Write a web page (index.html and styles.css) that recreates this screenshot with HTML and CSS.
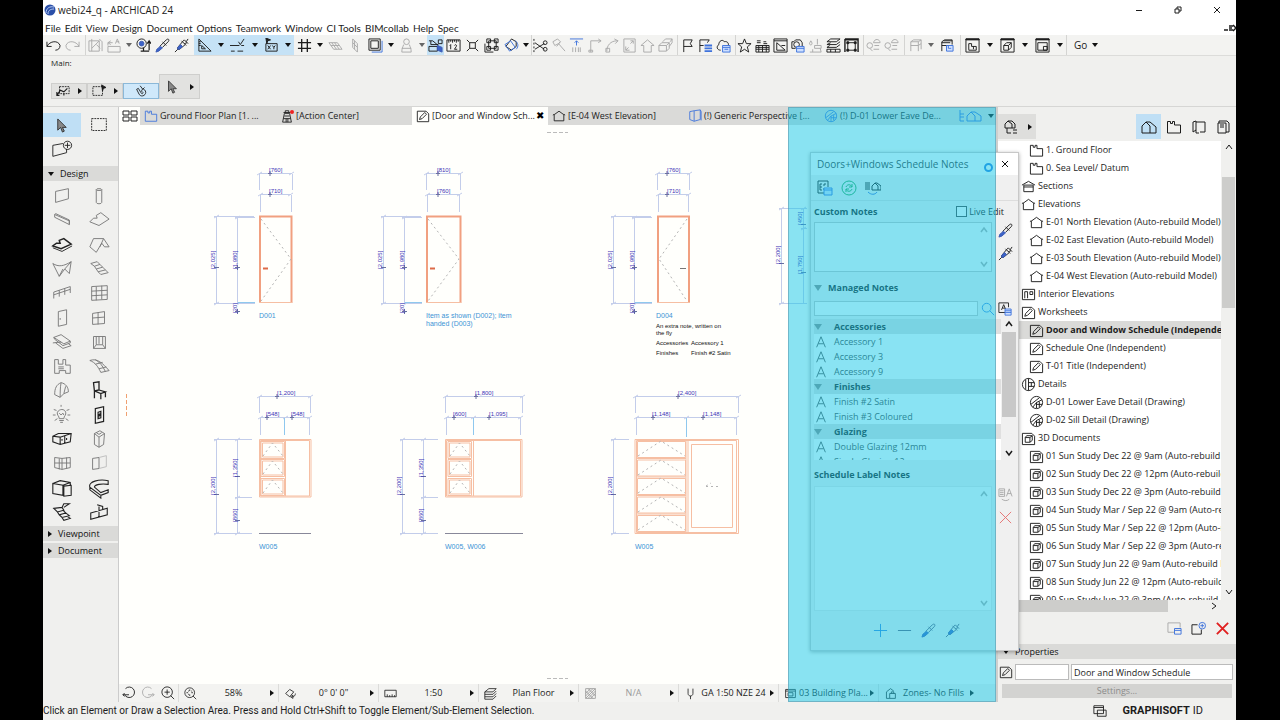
FILE: index.html
```
<!DOCTYPE html>
<html lang="en">
<head>
<meta charset="utf-8">
<title>webi24_q - ARCHICAD 24</title>
<link rel="stylesheet" href="styles.css">
</head>
<body>
<svg class="sprite" aria-hidden="true">
<symbol id="undo" viewBox="0 0 16 16"><path d="M1 4v5h5M1 9c3-6 12-7 14-1 0 3-2 5-5 5"/></symbol>
<symbol id="redo" viewBox="0 0 16 16"><path d="M15 4v5h-5M15 9C12 3 3 2 1 8c0 3 2 5 5 5"/></symbol>
<symbol id="pick" viewBox="0 0 16 16"><path d="M1 3h11v11H1zM4 1v13M4 11l8-8M12 1l3 3v10M9 7l4 4"/></symbol>
<symbol id="tag" viewBox="0 0 16 16"><path d="M1 9h13v6H1zM1 8V5h5M4 3L1 5l3 2M9 6l2-5 2 5M10 4h3"/></symbol>
<symbol id="mag" viewBox="0 0 16 16"><circle cx="6" cy="6" r="5"/><circle class="bf" cx="6" cy="6" r="2.5"/><path d="M8 10v4M5 14h9M14 13V4M12 6l2-3 2 3" stroke-width="1.3"/></symbol>
<symbol id="drop" viewBox="0 0 16 16"><path d="M9 5l3-3c2-2 4 0 2 2l-3 3M8 4l4 4M9 5l-4 4M11 7l-3 3"/><path class="bf" d="M5.500 9L8 10.500 4 14l-3 1 1-3z"/></symbol>
<symbol id="syr" viewBox="0 0 16 16"><path d="M11 2l4 4M13 4l2-3M8 3l5 5M9 4l2-2M11 6l3-1M1 15l3-3M9 4L4 10v2h2l6-5"/><path class="bf" d="M7 7l2 2-3 3H4v-2z"/></symbol>
<symbol id="tri" viewBox="0 0 16 16"><path d="M2 1v13h13zM5 8v3.500h4z M2 4h2M2 6h2M2 8h2"/></symbol>
<symbol id="snap" viewBox="0 0 16 16"><path d="M0 8h10M1 14h4M8 14h6M9 4l2 3 4-6M12 8h3"/></symbol>
<symbol id="xy" viewBox="0 0 16 16"><path d="M2 6h12v8H2zM4 8l3 4M7 8l-3 4M9 8l1.500 2L12 8M10.500 10v2"/><path class="k" d="M2 0l5 2-3 1-1 3z"/></symbol>
<symbol id="grid" viewBox="0 0 16 16"><path d="M5 1v14M11 1v14M1 5h14M1 11h14" stroke-width="1.400"/></symbol>
<symbol id="plane" viewBox="0 0 16 16"><path d="M1 5h9l5 7H6zM4 5l5 7M7 5l5 7M3 8h9"/></symbol>
<symbol id="planev" viewBox="0 0 16 16"><path d="M5 1l5 5v9l-5-5zM7 3v9M5 5l5 5"/></symbol>
<symbol id="sq" viewBox="0 0 16 16"><path d="M1 1h12v12H1zM3 3h8v8H3z"/><path class="bs" d="M15 3v12H4"/></symbol>
<symbol id="man" viewBox="0 0 16 16"><circle cx="8" cy="4" r="3"/><path d="M5 7c-1 3-2 4-2 8h10c0-4-1-5-2-8M3 11h10"/></symbol>
<symbol id="edit" viewBox="0 0 16 16"><path d="M1 3h4l6 5M3 3v4h8M11 2h4v4h-4zM1 9h9v5H1z"/><path class="bf" d="M10 8l5 2v5l-5-2z"/></symbol>
<symbol id="r12" viewBox="0 0 16 16"><path d="M1 2h14v12H1zM3 2v3M5 2v2M7 2v3M9 2v2M11 2v3M13 2v2M4 8l1-1v5M9 8c1-2 3 0 2 1l-2 3h3"/></symbol>
<symbol id="inter" viewBox="0 0 16 16"><path d="M5 5h6v6H5zM2 2l3 3M14 2l-3 3M2 14l3-3M14 14l-3-3"/></symbol>
<symbol id="nodes" viewBox="0 0 16 16"><path d="M5 3h8v8H5zM3 1h4v4H3zM11 1h4v4h-4zM11 9h4v4h-4zM3 9h4v4H3zM1 6v9h9"/></symbol>
<symbol id="rot" viewBox="0 0 16 16"><path d="M8 1l5 3v5l-5 4-6-4z"/><path class="bs" d="M1 7l6-4 5 7-6 4zM12 3c3 2 4 6 1 9"/></symbol>
<symbol id="cut" viewBox="0 0 16 16"><path d="M1 1v14" stroke-dasharray="2"/><path d="M2 5l10 7M2 12l10-6"/><circle cx="13" cy="5" r="2"/><circle cx="13" cy="12" r="2"/></symbol>
<symbol id="axe" viewBox="0 0 16 16"><path d="M2 4l5-3 3 3-2 2 7 8M2 4l2 4 4-2M10 4l-4 5"/></symbol>
<symbol id="arr" viewBox="0 0 16 16"><path class="bs" d="M1 1h14M8 8V3M6 5l2-2 2 2"/><path d="M4 10v5M7 10v5M10 10v5M12 10v5"/></symbol>
<symbol id="ang" viewBox="0 0 16 16"><path d="M4 15V3h11M2 13h4v2H2zM12 1l3 2-3 2"/></symbol>
<symbol id="arc" viewBox="0 0 16 16"><path d="M3 14C3 8 7 3 14 3M2 11h4v4H2zM11 1l4 2-3 3"/></symbol>
<symbol id="rs" viewBox="0 0 16 16"><path d="M2 1h12v14H2zM9 3h3v3M12 3L9 6M4 9v4h4M4 13l3-3"/></symbol>
<symbol id="home" viewBox="0 0 16 16"><path d="M1 8l7-6 7 6h-3v7H4V8z"/></symbol>
<symbol id="boxes" viewBox="0 0 16 16"><path d="M1 8l3-3h8l-3 3zM1 8v6h8V8M9 14l3-3V5M5 4l3-3h7l-2 3M15 1v4l-3 4"/></symbol>
<symbol id="flag" viewBox="0 0 16 16"><path d="M4 15V2h9l-2 4 2 3H4"/></symbol>
<symbol id="flagb" viewBox="0 0 16 16"><path d="M2 15V2h10l-2 3M2 8h4"/><path class="bs" d="M7 8h8M7 11h8M7 14h8" stroke-width="2"/></symbol>
<symbol id="cloudb" viewBox="0 0 16 16"><path d="M5 13c-4 0-5-4-2-6 0-4 4-6 6-3 3-1 5 2 4 4"/><path class="lb" d="M7 8h8v7H7zM7 10h8M9 12h4"/></symbol>
<symbol id="star" viewBox="0 0 16 16"><path d="M8 1l2 5h5l-4 3.500 1.500 5.500L8 12l-4.500 3L5 9.500 1 6h5z"/></symbol>
<symbol id="wall" viewBox="0 0 16 16"><path d="M1 8h14v7H1zM1 10h14M1 12h14M4 8v7M8 8v7M12 8v7M2 5h4M2 3h4M9 6h4M9 4h3"/></symbol>
<symbol id="pic" viewBox="0 0 16 16"><path d="M1 1h14v14H1zM1 3h14M4 13V5l9 8zM9 8h4"/></symbol>
<symbol id="gear" viewBox="0 0 16 16"><circle cx="7" cy="7" r="3"/><path d="M2 4h2l2-2h5l2 3v4M2 4v7h4"/><path class="lb" d="M7 9h8v6H7zM7 11h8"/></symbol>
<symbol id="brush" viewBox="0 0 16 16"><path d="M3 3c3 4 0 5-1 4s0-2 1-4M10 1v6M7 8h7v3H7zM2 15h12l-1-4M5 12v3"/></symbol>
<symbol id="lay" viewBox="0 0 16 16"><path d="M1 4l4-3h10l-4 3zM1 7l4-2M1 7h10l4-3M1 10h10l4-3M1 10l3-2M1 12h14v3H1zM5 12v3M10 12v3"/></symbol>
<symbol id="frame" viewBox="0 0 16 16"><path d="M1 2h14M1 1h14v14M1 1v14" stroke-width="1.500"/><path d="M4 5h8v8H4z"/><path class="k" d="M3 4h2v2H3zM11 4h2v2h-2zM3 12h2v2H3zM11 12h2v2h-2z"/></symbol>
<symbol id="bal" viewBox="0 0 16 16"><circle cx="4" cy="8" r="3"/><path d="M8 5c1-5 7-4 7 0zM9 8h5M8 12h6M4 11l3 3"/></symbol>
<symbol id="chairg" viewBox="0 0 16 16"><path d="M3 14V4l3-2h8v10M3 8h8l3-2M11 8v6M3 4h8l3-2M11 4v4"/></symbol>
<symbol id="chairb" viewBox="0 0 16 16"><path d="M3 14V4l3-2h8v5M3 8h8M3 5h9M5 3h9"/><path class="lb" d="M8 8h7v6H8zM10 8v3h3"/></symbol>
<symbol id="wp" viewBox="0 0 16 16"><path class="k" d="M1 1h14v1H1z"/><path d="M1 1h14v14H1zM4 12V6h3v3h5v4H4zM9 9v3"/></symbol>
<symbol id="w3" viewBox="0 0 16 16"><path class="k" d="M1 1h14v1H1z"/><path d="M1 1h14v14H1zM4 8h5v5H4zM4 8l3-3h5L9 8M12 5v5l-3 3"/></symbol>
<symbol id="wl" viewBox="0 0 16 16"><path class="k" d="M1 1h14v1H1z"/><path d="M1 1h14v14H1zM3 5h10v8H3zM9 9h4v4H9z"/></symbol>
<symbol id="arrow" viewBox="0 0 16 16"><path class="gf" d="M4 1v12l3-3 2 5 2-1-2-4h4z"/></symbol>
<symbol id="plan" viewBox="0 0 16 16"><path d="M1.500 14V2.500h3v2h2v-2h2V6h6v8z"/></symbol>
<symbol id="elev" viewBox="0 0 16 16"><path d="M2.500 6.500L8 2.500l5.500 4v7h-11zM1 7l1.500-1M15 7l-1.500-1"/></symbol>
<symbol id="sect" viewBox="0 0 16 16"><path d="M1 6.500l7-4 7 4M3 6.500v7h10v-7zM3 8.500h10"/></symbol>
<symbol id="iel" viewBox="0 0 16 16"><path d="M1.500 2.500h13v11h-13zM4 12V5h3v7M9.500 5h3v3h-3z"/></symbol>
<symbol id="work" viewBox="0 0 16 16"><path d="M1.500 2.500h10l3 3v9h-13zM4 12l1-3 5-5 2 2-5 5z"/></symbol>
<symbol id="det" viewBox="0 0 16 16"><circle cx="8" cy="8" r="6.500"/><path d="M8 1.500v13M5 3v10M8 6h6M8 10h6M11 6v4"/></symbol>
<symbol id="d2" viewBox="0 0 16 16"><circle cx="8" cy="8" r="6.500"/><path d="M2 10l9-7M4 13l4-5 6-3M8 8v6M8 10h6M11 7v6"/></symbol>
<symbol id="d3" viewBox="0 0 16 16"><path d="M1.500 2.500h10l3 3v9h-13zM4.500 7h5v5h-5zM4.500 7L6 5h6L9.500 7M12 5v5l-2.500 2"/></symbol>
<symbol id="tower" viewBox="0 0 16 16"><path d="M5 5h6l2 10H3zM4 4h8M6 4V2h4v2M5 8h6M4 11h8M7 11v4M9 11v4"/></symbol>
<symbol id="persp" viewBox="0 0 16 16"><path d="M2 3l5-1v12l-5-2zM7 2l7-1v11l-7 2M14 1l1 2v10"/></symbol>
<symbol id="nav" viewBox="0 0 16 16"><path d="M2 5l3-3 4 3v4H2zM5 2h4l3 3v4H9M4 9v5h4M10 11h4M10 14h4"/></symbol>
<symbol id="house" viewBox="0 0 16 16"><path d="M1 14V7l4-4 4 4v7zM5 3h4l6 5v6H9"/></symbol>
<symbol id="lbk" viewBox="0 0 16 16"><path d="M2 13V3l3-1v9zM5 3h9v10H9M5 11v3h3"/></symbol>
<symbol id="book" viewBox="0 0 16 16"><path d="M2 4h8v10H2zM4 6h4M4 8h4M3 4V2h8l2 2v9h-3"/></symbol>
<symbol id="ref" viewBox="0 0 16 16"><circle cx="8" cy="8" r="7"/><path d="M5 7c1-3 5-3 6 0M11 4v3H8M11 9c-1 3-5 3-6 0M5 12V9h3"/></symbol>
<symbol id="ec" viewBox="0 0 16 16"><path d="M10 13H1V1h10v6M3 4h2M3 4v6h2M3 7h2M9 4H7v2M7 8v2"/><path class="lb" d="M7 8h8v7H7zM7 10h8"/></symbol>
<symbol id="ab" viewBox="0 0 16 16"><path d="M8 12H1V1h11v5M4 9l2.500-6L9 9M5 7h3"/><path class="lb" d="M8 8h7v7H8zM8 10h7M8 12h7"/></symbol>
<symbol id="link" viewBox="0 0 16 16"><path d="M0 3h5M0 5h5M0 7h5M0 9h5M7 6l3-3 3 3v4H7zM10 3h2l4 3v4h-3"/><path class="bs" d="M3 12c3 3 7 3 9 0"/></symbol>
<symbol id="A" viewBox="0 0 16 16"><path d="M3 14L8 2l5 12M5 10h6"/></symbol>
<symbol id="lens" viewBox="0 0 16 16"><circle cx="6.500" cy="6.500" r="5"/><path d="M10 10l5 5"/></symbol>
<symbol id="zin" viewBox="0 0 16 16"><circle cx="7" cy="7" r="6"/><path d="M11 11l4 4M4 7h6M7 4v6"/></symbol>
<symbol id="zfit" viewBox="0 0 16 16"><circle cx="7" cy="7" r="6"/><path d="M11 11l4 4M3 7h2M9 7h2M7 3v2M7 9v2M5 5h1M9 5h1M5 9h1"/></symbol>
<symbol id="zprev" viewBox="0 0 16 16"><path d="M3 10a6 6 0 1 0 1-7M1 10h7M3 8l-2 2 2 2"/></symbol>
<symbol id="znext" viewBox="0 0 16 16"><path d="M13 10a6 6 0 1 1-1-7M15 10H8M13 8l2 2-2 2"/></symbol>
<symbol id="rule" viewBox="0 0 16 16"><path d="M1 4h14v8H1zM4 9v3M7 10v2M10 9v3M13 10v2"/></symbol>
<symbol id="orient" viewBox="0 0 16 16"><path d="M2 8l5-5 5 3-5 6zM10 12c3 0 4-2 4-4M8 12l3-2v4z"/></symbol>
<symbol id="stack" viewBox="0 0 16 16"><path d="M1 6l5-4h9l-4 4zM1 9h10l4-4M1 12h10l4-4M1 15h10l4-4M1 6v9"/></symbol>
<symbol id="hatch" viewBox="0 0 16 16"><path d="M2 2h12v12H2zM2 8l6-6M2 14L14 2M8 14l6-6M2 5l9 9M5 2l9 9M2 11l9-9M5 14l9-9"/></symbol>
<symbol id="pen" viewBox="0 0 16 16"><path d="M5 2v6c0 4 6 4 6 0V2M8 11v4"/></symbol>
<symbol id="doc" viewBox="0 0 16 16"><path d="M2 3h12v10H2zM2 5h12M5 7h6v4H5z"/></symbol>
<symbol id="lock" viewBox="0 0 16 16"><path d="M3 6l5-4 4 3M3 6v8h4M7 8h7v6H7zM9 8V6h3v2"/></symbol>
<symbol id="newv" viewBox="0 0 16 16"><path d="M11 9v5H1V4h6"/><circle class="bs" cx="12" cy="5" r="3.500"/><path class="bs" d="M10 5h4M12 3v4"/></symbol>
<symbol id="setv" viewBox="0 0 16 16"><path d="M8 12H1V2h13v5"/><path class="bs" d="M8 8h7v6H8zM8 10h7"/></symbol>
<symbol id="x" viewBox="0 0 16 16"><path d="M2 2l12 12M14 2L2 14"/></symbol>
<symbol id="plus" viewBox="0 0 16 16"><path d="M8 1v14M1 8h14"/></symbol>
<symbol id="minus" viewBox="0 0 16 16"><path d="M1 8h14"/></symbol>
<symbol id="up" viewBox="0 0 8 8"><path d="M1 6l3-4 3 4"/></symbol>
<symbol id="dn" viewBox="0 0 8 8"><path d="M1 2l3 4 3-4"/></symbol>
<symbol id="rt" viewBox="0 0 8 8"><path d="M2 1l4 3-4 3"/></symbol>
<!-- toolbox -->
<symbol id="t1" viewBox="0 0 24 24"><path d="M5 7l14-3v11L5 19z"/></symbol>
<symbol id="t2" viewBox="0 0 24 24"><ellipse cx="12" cy="5" rx="3" ry="1"/><path d="M9 5v14c0 2 6 2 6 0V5"/></symbol>
<symbol id="t3" viewBox="0 0 24 24"><path d="M4 6l16 7v4L4 9zM4 6l1-1 15 7v5"/></symbol>
<symbol id="t4" viewBox="0 0 24 24"><path d="M2 14l4-4 4 0-1-3 5-3 9 7-11 7z"/></symbol>
<symbol id="t5" viewBox="0 0 24 24"><path stroke-width="1.600" d="M2 13l4-3 4 0-1-3 5-2 8 6-11 5z"/><path d="M2 15l10 4 11-6"/></symbol>
<symbol id="t6" viewBox="0 0 24 24"><path d="M2 14l4-9h11l6 9-5 0-3-4-6 10zM17 5l-4 9"/></symbol>
<symbol id="t7" viewBox="0 0 24 24"><path d="M2 6c6 4 12 3 20-2l-2 13-5-5-6 8zM15 12l7-8M9 20l4-8"/></symbol>
<symbol id="t8" viewBox="0 0 24 24"><path d="M3 6l7-2 3 3-6 2zM7 9l2 3 7-2-3-3M9 12l2 3 8-2-3-3M11 15l3 3 8-2-3-3"/></symbol>
<symbol id="t9" viewBox="0 0 24 24"><path d="M3 18v-7l18-6v7M3 14l18-6M9 9v7M15 7v7"/></symbol>
<symbol id="t10" viewBox="0 0 24 24"><path d="M4 5l17-1v15L4 20zM9 5v15M15 4v15M4 10l17-1M4 15l17-1"/></symbol>
<symbol id="t11" viewBox="0 0 24 24"><path d="M8 5l9-2v16l-9 2zM10 12v2"/></symbol>
<symbol id="t12" viewBox="0 0 24 24"><path d="M5 7l13-2v13l-13 1zM11 6v13M5 12l13-1"/></symbol>
<symbol id="t13" viewBox="0 0 24 24"><path d="M3 7l8-3 10 7-7 3zM3 7l1 2 9 7 8-3v-2M5 13l8 6 9-3-3-2M2 13l9-1"/></symbol>
<symbol id="t14" viewBox="0 0 24 24"><path d="M6 6h13v13H6zM9 6v9h7V6M6 19l3-4M19 19l-3-4M12 6v8"/></symbol>
<symbol id="t15" viewBox="0 0 24 24"><path d="M4 5h4v5h5V5h3v6h5v9h-5v-3H9v3H4zM8 13h6M8 15h6"/></symbol>
<symbol id="t16" viewBox="0 0 24 24"><path d="M2 6c8-3 14 3 21 11l-9 2C11 13 8 8 2 6zM8 10l8-2M12 15l8-2M8 5c5 3 8 7 11 13"/></symbol>
<symbol id="t17" viewBox="0 0 24 24"><path d="M4 17c0-7 2-11 7-13 5 1 8 5 8 10l-5 2-4 4zM11 4c-1 5-1 11-1 16M16 8l-2 8"/></symbol>
<symbol id="t18" viewBox="0 0 24 24"><path stroke-width="1.400" d="M6 4l6-1v9l-5 1zM7 13v8M12 12l7 2-5 2-7-3M19 14v6M14 16v6"/></symbol>
<symbol id="t19" viewBox="0 0 24 24"><path d="M9 16c0-3-3-4-2-7 2-4 8-4 9 0 1 3-2 4-2 7zM9 18h5M10 20h3M9 10l2 2 2-2 1 2M3 6l3 1M20 6l-3 1M2 12h3M18 12h3M4 18l3-2M19 18l-3-2M11 1v2"/></symbol>
<symbol id="t20" viewBox="0 0 24 24"><path d="M8 5l9-2v16l-9 2zM11 9l3-1v7l-3 1zM12 11v3M13 10v3" stroke-width="1.300"/></symbol>
<symbol id="t21" viewBox="0 0 24 24"><path stroke-width="1.200" d="M2 9l6-3 14 0-1 9-11 3-8-3zM2 9l8 1 12-4M10 10v8M15 9v8M12 12v2M17 11v2"/></symbol>
<symbol id="t22" viewBox="0 0 24 24"><path d="M7 6l6-3 5 3-1 12-5 3-5-3zM7 6l5 4 6-4M12 10v11M9 5l3 2 3-2"/></symbol>
<symbol id="t23" viewBox="0 0 24 24"><path d="M4 6l8 1 9-1v11l-9 2-8-2zM4 12h17M9 7v12M12 7v12M17 6v12"/></symbol>
<symbol id="t24" viewBox="0 0 24 24"><path d="M5 7l7-1v12l-7 1z"/><path stroke="#bbb" d="M12 6l8-2v12l-8 2"/></symbol>
<symbol id="t25" viewBox="0 0 24 24"><path stroke-width="1.200" d="M2 7l8-3 11 2v3M2 7l11 2v11L2 18zM13 9l8-3M14 10l8-1v11l-8 1z"/></symbol>
<symbol id="t26" viewBox="0 0 24 24"><path stroke-width="1.200" d="M22 4c-10-2-22 1-20 7l12 9 8-3v-3l-8 3-7-6c0-3 8-4 15-3zM2 11v3l12 9v-3"/></symbol>
<symbol id="t27" viewBox="0 0 24 24"><path stroke-width="1.200" d="M3 8l9-1 2 3-7 2zM12 7l2-4h6l-6 4M7 12l2 3 7-2-3-3M9 15l3 3 8-2-4-3M12 18l2 3 7-2-3-2"/></symbol>
<symbol id="t28" viewBox="0 0 24 24"><path stroke-width="1.200" d="M3 13l18-5v7L3 20zM12 6v12M10 4l6 2v3"/></symbol>
<symbol id="t29" viewBox="0 0 24 24"><path d="M4 5h16v13H4z" stroke-dasharray="2 1"/></symbol>
<symbol id="t30" viewBox="0 0 24 24"><path d="M2 8l11-2M2 8v12l15-4v-4"/><circle cx="18" cy="8" r="4.500"/><path d="M15 8h6M18 5v6"/></symbol>
</svg>

<div class="app">
<header class="title"><svg class="logo" viewBox="0 0 12 12"><circle cx="6" cy="6" r="5.500" fill="#2b4fa8" stroke="none"/><path d="M2 9c0-5 4-7 8-6M4 10c0-4 3-5 6-5" stroke="#b9cdf3"/></svg><h1>webi24_q - ARCHICAD 24</h1>
<div class="win"><button aria-label="Minimise"><svg viewBox="0 0 8 8"><path d="M1 4.500h6"/></svg></button><button aria-label="Restore"><svg viewBox="0 0 8 8"><path d="M1 3h4v4H1zM3 3V1h4v4H5"/></svg></button><button aria-label="Close"><svg viewBox="0 0 8 8"><path d="M1 1l6 6M7 1L1 7"/></svg></button></div></header>
<nav class="menu"><a href="#">File</a><a href="#">Edit</a><a href="#">View</a><a href="#">Design</a><a href="#">Document</a><a href="#">Options</a><a href="#">Teamwork</a><a href="#">Window</a><a href="#">CI Tools</a><a href="#">BIMcollab</a><a href="#">Help</a><a href="#">Spec</a><svg class="dock" viewBox="0 0 12 8"><path d="M0 6h4M5 2h4M5 4h3M5 6h4M9 1l3 3-3 3" stroke-width="1.500"/></svg></nav>

<div class="bar">
<div class="g w2"><button aria-label="Undo"><svg><use href="#undo"/></svg></button><button class="off" aria-label="Redo"><svg><use href="#redo"/></svg></button></div>
<div class="g w6"><button class="off" aria-label="Find"><svg><use href="#pick"/></svg></button><button class="off" aria-label="Label"><svg><use href="#tag"/></svg></button><i class="c off"></i><button aria-label="Inspect"><svg><use href="#mag"/></svg></button><button aria-label="Pick up"><svg><use href="#drop"/></svg></button><button aria-label="Inject"><svg><use href="#syr"/></svg></button></div>
<div class="g on w5"><button aria-label="Guides"><svg><use href="#tri"/></svg></button><i class="c"></i><button aria-label="Snap"><svg><use href="#snap"/></svg></button><i class="c"></i><button aria-label="Coordinates"><svg><use href="#xy"/></svg></button><i class="c"></i></div>
<div class="g n w8"><button aria-label="Grid"><svg><use href="#grid"/></svg></button><i class="c"></i><button class="off" aria-label="Plane"><svg><use href="#plane"/></svg></button><button class="off" aria-label="Vertical plane"><svg><use href="#planev"/></svg></button><button aria-label="Trace"><svg><use href="#sq"/></svg></button><i class="c"></i><button class="off" aria-label="Lock"><svg><use href="#man"/></svg></button><i class="c off"></i></div>
<div class="g n on w1"><button aria-label="Edit"><svg><use href="#edit"/></svg></button></div>
<div class="g n w4"><button aria-label="Measure"><svg><use href="#r12"/></svg></button><button aria-label="Explode"><svg><use href="#inter"/></svg></button><button aria-label="Group"><svg><use href="#nodes"/></svg></button><button aria-label="Rotate"><svg><use href="#rot"/></svg></button><i class="c"></i></div>
<div class="g w9"><button aria-label="Cut"><svg><use href="#cut"/></svg></button><button class="off" aria-label="Trim"><svg><use href="#axe"/></svg></button><button class="off" aria-label="Adjust"><svg><use href="#arr"/></svg></button><button class="off" aria-label="Corner"><svg><use href="#ang"/></svg></button><button class="off" aria-label="Fillet"><svg><use href="#arc"/></svg></button><button class="off" aria-label="Resize"><svg><use href="#rs"/></svg></button><button class="off" aria-label="Roof"><svg><use href="#home"/></svg></button><button class="off" aria-label="Solids"><svg><use href="#boxes"/></svg></button></div>
<div class="g w3"><button aria-label="Flag"><svg><use href="#flag"/></svg></button><button aria-label="Flag list"><svg><use href="#flagb"/></svg></button><button aria-label="Cloud"><svg><use href="#cloudb"/></svg></button></div>
<div class="g w7"><button aria-label="Favourites"><svg><use href="#star"/></svg></button><button aria-label="Materials"><svg><use href="#wall"/></svg></button><button aria-label="Picture"><svg><use href="#pic"/></svg></button><button aria-label="Camera"><svg><use href="#gear"/></svg></button><button class="off" aria-label="Surface"><svg><use href="#brush"/></svg></button><button aria-label="Layers"><svg><use href="#lay"/></svg></button><button aria-label="Frame"><svg><use href="#frame"/></svg></button></div>
<div class="g w2"><button class="off" aria-label="Send"><svg><use href="#bal"/></svg></button><button class="off" aria-label="Receive"><svg><use href="#bal"/></svg></button></div>
<div class="g w10"><button class="off" aria-label="Object"><svg><use href="#chairg"/></svg></button><i class="c off"></i><button aria-label="Object settings"><svg><use href="#chairb"/></svg></button></div>
<div class="g w6"><button aria-label="Plan window"><svg><use href="#wp"/></svg></button><i class="c"></i><button aria-label="3D window"><svg><use href="#w3"/></svg></button><i class="c"></i><button aria-label="Layout window"><svg><use href="#wl"/></svg></button><i class="c"></i></div>
<button class="go">Go<i class="c"></i></button>
</div>

<section class="info"><p>Main:</p><div class="modes"><button class="m" aria-label="Selection method"><svg viewBox="0 0 16 16"><path d="M4 3h11v8H4z" stroke-dasharray="2 1"/><path d="M1 13l4-6 4 2 4-4M1 9v4h3M9 11v2" stroke-width="1.300"/></svg><i class="r"></i></button><button class="m" aria-label="Marquee method"><svg viewBox="0 0 16 16"><path d="M1 3h11v10H1z" stroke-dasharray="2 1"/><path class="k" d="M11 1l5 3-3 1-1 3z"/></svg><i class="r"></i></button><button class="m sel" aria-label="Magnet"><svg viewBox="0 0 16 16"><path d="M3 6l3 6c3 4 9 0 7-4S8 6 9 9M3 6l2-1 3 5c1 2 3 1 2-1M7 2l3 4 2-2"/></svg></button><button class="m tall" aria-label="Arrow"><svg><use href="#arrow"/></svg><i class="r"></i></button></div></section>

<main>
<aside class="tools">
<div class="pair"><button class="sel" aria-label="Arrow"><svg class="s"><use href="#arrow"/></svg></button><button aria-label="Marquee"><svg class="k2"><use href="#t29"/></svg></button><button aria-label="New tool"><svg class="k2"><use href="#t30"/></svg></button></div>
<h2><i class="c"></i>Design</h2>
<div class="pair set">
<button aria-label="Wall"><svg><use href="#t1"/></svg></button><button aria-label="Column"><svg><use href="#t2"/></svg></button><button aria-label="Beam"><svg><use href="#t3"/></svg></button><button aria-label="Slab"><svg><use href="#t4"/></svg></button><button aria-label="Slab 2" class="dk"><svg><use href="#t5"/></svg></button><button aria-label="Roof"><svg><use href="#t6"/></svg></button><button aria-label="Shell"><svg><use href="#t7"/></svg></button><button aria-label="Stair"><svg><use href="#t8"/></svg></button><button aria-label="Railing"><svg><use href="#t9"/></svg></button><button aria-label="Curtain wall"><svg><use href="#t10"/></svg></button><button aria-label="Door"><svg><use href="#t11"/></svg></button><button aria-label="Window"><svg><use href="#t12"/></svg></button><button aria-label="Skylight"><svg><use href="#t13"/></svg></button><button aria-label="Opening"><svg><use href="#t14"/></svg></button><button aria-label="Zone"><svg><use href="#t15"/></svg></button><button aria-label="Mesh"><svg><use href="#t16"/></svg></button><button aria-label="Morph"><svg><use href="#t17"/></svg></button><button aria-label="Object" class="dk"><svg><use href="#t18"/></svg></button><button aria-label="Lamp"><svg><use href="#t19"/></svg></button><button aria-label="Switch" class="dk"><svg><use href="#t20"/></svg></button><button aria-label="Cabinet" class="dk"><svg><use href="#t21"/></svg></button><button aria-label="Equipment"><svg><use href="#t22"/></svg></button><button aria-label="Corner window"><svg><use href="#t23"/></svg></button><button aria-label="Wall end"><svg><use href="#t24"/></svg></button><button aria-label="Cupboard" class="dk"><svg><use href="#t25"/></svg></button><button aria-label="Counter" class="dk"><svg><use href="#t26"/></svg></button><button aria-label="Steps" class="dk"><svg><use href="#t27"/></svg></button><button aria-label="Fence" class="dk"><svg><use href="#t28"/></svg></button>
</div>
<h2><i class="r"></i>Viewpoint</h2>
<h2><i class="r"></i>Document</h2>
</aside>

<section class="work">
<div class="tabs"><button class="all" aria-label="All tabs"><svg class="k2" viewBox="0 0 16 12"><path d="M1 1h6v4H1zM9 1h6v4H9zM1 7h6v4H1zM9 7h6v4H9z"/></svg></button>
<a href="#" class="blue"><svg><use href="#plan"/></svg><span>Ground Floor Plan [1. ...</span></a><a href="#"><svg><use href="#tower"/><circle cx="13" cy="3" r="2" fill="#e22" stroke="none"/></svg><span>[Action Center]</span></a><a href="#" class="cur"><svg><use href="#work"/></svg><span>[Door and Window Sch...</span><b>✖</b></a><a href="#"><svg><use href="#elev"/></svg><span>[E-04 West Elevation]</span></a><a href="#" class="blue"><svg><use href="#persp"/></svg><span>(!) Generic Perspective [...</span></a><a href="#" class="blue"><svg><use href="#d2"/></svg><span>(!) D-01 Lower Eave De...</span></a><button class="tabm" aria-label="Tab list"><svg viewBox="0 0 24 16"><path d="M1 2v11h4M1 6h4M1 9h4M8 13V8l4-4 4 4v5zM12 4h4l6 4v5h-6"/></svg><i class="c"></i></button></div>
<div class="canvas">
<svg width="877" height="559" viewBox="119 125 877 559" class="draw">
<defs>
<g id="vdoor" class="dim"><path d="M216.500 216v87M237.500 217v86M214 216.500h40M235 217.500h20M214 303.500h41M214 218l5-3M235 219l5-3M214 305l5-3"/><path class="lt" d="M238 302.500h17"/><path class="tk" d="M214 267.500h5M235 267.500h5M237.500 265v5M235 311.500h5M237.500 309v5"/><text transform="translate(215 269) rotate(-90)">[2,025]</text><text transform="translate(237 269) rotate(-90)">[1,980]</text><text transform="translate(237 313) rotate(-90)">[20]</text></g>
<g id="vwin" class="dim"><path d="M216.500 439v94M237.500 439v94M214 439.500h38M235 497.500h17M214 533.500h38M214 441l5-3M235 441l5-3M235 499l5-3M214 535l5-3M235 535l5-3"/><path class="tk" d="M214 494.500h5M235 476.500h5M235 520.500h5"/><text transform="translate(215 495) rotate(-90)">[2,200]</text><text transform="translate(237 477) rotate(-90)">[1,350]</text><text transform="translate(237 522) rotate(-90)">[860]</text></g>
<g id="p24"><path class="fr" d="M1 .5h23.500v17H1zM2.500 2h20.500v14H2.500z"/><path class="ds" d="M3 15L12.500 2 23 15"/></g>
</defs>
<!-- D001 -->
<use href="#vdoor"/>
<g class="dim"><path d="M259 173.500h33M260 194.500h31M257 175l5-3M289 175l5-3M258 196l5-3M288 196l5-3M259.500 174v16M292.500 174v16M260.500 195v17M291.500 195v17"/><path class="tk" d="M268 173.500h4M270 171v5M268 194.500h4M270 192v5"/><text x="269" y="172">[760]</text><text x="269" y="193">[710]</text></g>
<path class="dr" d="M260 303V216.500h31.500V303"/><path class="fr" d="M259 302.500h33"/><path class="ds" d="M261 219l30 40-30 42"/><path class="hd" d="M263 268.500h5"/><text class="lb2" x="259" y="318">D001</text>
<!-- D002 -->
<use href="#vdoor" x="167"/>
<g class="dim"><path d="M426 173.500h35M427 194.500h33M424 175l5-3M458 175l5-3M425 196l5-3M457 196l5-3M426.500 174v16M460.500 174v16M427.500 195v17M459.500 195v17"/><path class="tk" d="M436 173.500h4M438 171v5M436 194.500h4M438 192v5"/><text x="437" y="172">[810]</text><text x="437" y="193">[760]</text></g>
<path class="dr" d="M427 303V216.500h33.500V303"/><path class="fr" d="M426 302.500h35"/><path class="ds" d="M428 219l31 40-31 42"/><path class="hd" d="M430 268.500h5"/><text class="lb2" x="426" y="318">Item as shown (D002); item</text><text class="lb2" x="426" y="326">handed (D003)</text>
<!-- D004 -->
<use href="#vdoor" x="397"/>
<g class="dim"><path d="M657 173.500h33M658 194.500h31M655 175l5-3M687 175l5-3M656 196l5-3M686 196l5-3M657.500 174v16M689.500 174v16M658.500 195v17M688.500 195v17"/><path class="tk" d="M665 173.500h4M667 171v5M665 194.500h4M667 192v5"/><text x="667" y="172">[760]</text><text x="667" y="193">[710]</text></g>
<path class="dr" d="M658 303V216.500h31V303"/><path class="fr" d="M657 302.500h33"/><path class="ds" d="M687 219l-28 40 28 42"/><path d="M680 268.500h6" stroke="#777"/><text class="lb2" x="656" y="318">D004</text>
<g class="nt"><text x="656" y="328">An extra note, written on</text><text x="656" y="335">the fly</text><text x="656" y="345">Accessories</text><text x="691" y="345">Accessory 1</text><text x="656" y="355">Finishes</text><text x="691" y="355">Finish #2 Satin</text></g>
<!-- next door's dimensions -->
<g class="dim"><path d="M781.500 208v95M803.500 208v95M779 208.500h28M779 303.500h28M801 228.500h6M779 210l5-3M779 305l5-3M801 210l5-3M801 230l5-3"/><path class="tk" d="M779 263.500h5M801 224.500h5M801 272.500h5"/><text transform="translate(780 264) rotate(-90)">[2,200]</text><text transform="translate(802 225) rotate(-90)">[450]</text><text transform="translate(802 274) rotate(-90)">[1,750]</text></g>
<!-- W005 -->
<use href="#vwin"/>
<g class="dim"><path d="M259 396.500h52M260 417.500h50M257 398l5-3M308 398l5-3M258 419l5-3M283 419l5-3M307 419l5-3M259.500 397v16M310.500 397v16M260.500 418v17M309.500 418v17"/><path class="lt" d="M284.500 418v17"/><path class="tk" d="M275 396.500h4M277 394v5M265 417.500h4M267 415v5M290 417.500h4M292 415v5"/><text x="277" y="395">[1,200]</text><text x="266" y="416">[548]</text><text x="291" y="416">[548]</text></g>
<path class="fr" d="M259.500 439.500h51.500v57.500h-51.500zM260.500 440.500h49v55.500h-49zM285.500 440v56"/><use href="#p24" x="260" y="441"/><use href="#p24" x="260" y="459"/><use href="#p24" x="260" y="478"/><path d="M259 533.500h52" stroke="#889"/><text class="lb2" x="259" y="549">W005</text>
<!-- W005, W006 -->
<use href="#vwin" x="186"/>
<g class="dim"><path d="M445 396.500h77M446 417.500h75M443 398l5-3M520 398l5-3M444 419l5-3M471 419l5-3M518 419l5-3M445.500 397v16M522.500 397v16M446.500 418v17M520.500 418v17"/><path class="lt" d="M473.500 418v17"/><path class="tk" d="M474 396.500h4M476 394v5M452 417.500h4M454 415v5M487 417.500h4M489 415v5"/><text x="475" y="395">[1,800]</text><text x="453" y="416">[600]</text><text x="489" y="416">[1,095]</text></g>
<path class="fr" d="M445.500 439.500H522v57.500h-76.500zM446.500 440.500H520.500v55.500h-74zM473.500 440v56"/><use href="#p24" x="447" y="441"/><use href="#p24" x="447" y="459"/><use href="#p24" x="447" y="478"/><path d="M445 533.500h78" stroke="#889"/><text class="lb2" x="445" y="549">W005, W006</text>
<!-- W005 wide -->
<g class="dim"><path d="M635 396.500h103M636 417.500h101M633 398l5-3M736 398l5-3M634 419l5-3M684 419l5-3M734 419l5-3M635.500 397v16M738.500 397v16M636.500 418v17M736.500 418v17M613.500 439v94M611 439.500h18M611 533.500h18M611 441l5-3M611 535l5-3"/><path class="lt" d="M686.500 418v19"/><path class="tk" d="M676 396.500h4M678 394v5M651 417.500h4M653 415v5M701 417.500h4M703 415v5M611 494.500h5"/><text x="678" y="395">[2,400]</text><text x="652" y="416">[1,148]</text><text x="703" y="416">[1,148]</text><text transform="translate(612 495) rotate(-90)">[2,200]</text></g>
<path class="fr" d="M635 439.500h103.500v94H635zM636.500 440.500h100v92h-100zM686 440v93M688 440v93M691.500 444.500h41v83h-41zM637.500 441.500h48v16h-48zM637.500 460h48v16h-48zM637.500 478.500h48v16h-48zM637.500 497h48v16h-48zM637.500 515.500h48v16h-48zM636 458.500h50M636 477h50M636 495.500h50M636 514h50"/><path class="ds" d="M638 456l23-15 24 15M638 475l23-15 24 15M638 493l23-15 24 15M638 512l23-15 24 15M638 530l23-15 24 15M706 486.500h14M706 486l5-3"/><text class="lb2" x="635" y="549">W005</text>
<path d="M547 132.500h21M547 678.500h21" stroke="#bbb" stroke-dasharray="4 2"/><path d="M126.500 394v22" stroke="#f0a070" stroke-dasharray="4 2"/>
</svg></div>
<div class="quick"><div class="zoom"><button aria-label="Previous zoom"><svg><use href="#zprev"/></svg></button><button class="off" aria-label="Next zoom"><svg><use href="#znext"/></svg></button><button aria-label="Zoom in"><svg><use href="#zin"/></svg></button></div>
<div class="q"><svg><use href="#zfit"/></svg><span>58%</span><i class="r"></i></div><div class="q"><svg><use href="#orient"/></svg><span>0° 0' 0"</span><i class="r"></i></div><div class="q"><svg><use href="#rule"/></svg><span>1:50</span><i class="r"></i></div><div class="q"><svg><use href="#stack"/></svg><span>Plan Floor</span><i class="r"></i></div><div class="q dim2"><svg><use href="#hatch"/></svg><span>N/A</span><i class="r"></i></div><div class="q"><svg><use href="#pen"/></svg><span>GA 1:50 NZE 24</span><i class="r"></i></div><div class="q"><svg><use href="#doc"/></svg><span>03 Building Pla...</span><i class="r"></i></div><div class="q"><svg><use href="#lock"/></svg><span>Zones- No Fills</span><i class="r"></i></div></div>
</section>

<aside class="side">
<div class="top"><button class="chooser" aria-label="Navigator"><svg><use href="#nav"/></svg><i class="r"></i></button><div class="maps"><button class="sel" aria-label="Project map"><svg><use href="#house"/></svg></button><button aria-label="View map"><svg><use href="#plan"/></svg></button><button aria-label="Layout book"><svg><use href="#lbk"/></svg></button><button aria-label="Publisher"><svg><use href="#book"/></svg></button></div></div>
<div class="treebox"><ul class="tree">
<li class="k1"><svg><use href="#plan"/></svg>1. Ground Floor</li><li class="k1"><svg><use href="#plan"/></svg>0. Sea Level/ Datum</li><li><svg><use href="#sect"/></svg>Sections</li><li><svg><use href="#elev"/></svg>Elevations</li><li class="k1"><svg><use href="#elev"/></svg>E-01 North Elevation (Auto-rebuild Model)</li><li class="k1"><svg><use href="#elev"/></svg>E-02 East Elevation (Auto-rebuild Model)</li><li class="k1"><svg><use href="#elev"/></svg>E-03 South Elevation (Auto-rebuild Model)</li><li class="k1"><svg><use href="#elev"/></svg>E-04 West Elevation (Auto-rebuild Model)</li><li><svg><use href="#iel"/></svg>Interior Elevations</li><li><svg><use href="#work"/></svg>Worksheets</li><li class="k1 cur"><svg><use href="#work"/></svg>Door and Window Schedule (Independent)</li><li class="k1"><svg><use href="#work"/></svg>Schedule One (Independent)</li><li class="k1"><svg><use href="#work"/></svg>T-01 Title (Independent)</li><li><svg><use href="#det"/></svg>Details</li><li class="k1"><svg><use href="#d2"/></svg>D-01 Lower Eave Detail (Drawing)</li><li class="k1"><svg><use href="#d2"/></svg>D-02 Sill Detail (Drawing)</li><li><svg><use href="#d3"/></svg>3D Documents</li><li class="k1"><svg><use href="#d3"/></svg>01 Sun Study Dec 22 @ 9am (Auto-rebuild Model)</li><li class="k1"><svg><use href="#d3"/></svg>02 Sun Study Dec 22 @ 12pm (Auto-rebuild Model)</li><li class="k1"><svg><use href="#d3"/></svg>03 Sun Study Dec 22 @ 3pm (Auto-rebuild Model)</li><li class="k1"><svg><use href="#d3"/></svg>04 Sun Study Mar / Sep 22 @ 9am (Auto-rebuild Model)</li><li class="k1"><svg><use href="#d3"/></svg>05 Sun Study Mar / Sep 22 @ 12pm (Auto-rebuild Model)</li><li class="k1"><svg><use href="#d3"/></svg>06 Sun Study Mar / Sep 22 @ 3pm (Auto-rebuild Model)</li><li class="k1"><svg><use href="#d3"/></svg>07 Sun Study Jun 22 @ 9am (Auto-rebuild Model)</li><li class="k1"><svg><use href="#d3"/></svg>08 Sun Study Jun 22 @ 12pm (Auto-rebuild Model)</li><li class="k1"><svg><use href="#d3"/></svg>09 Sun Study Jun 22 @ 3pm (Auto-rebuild Model)</li>
</ul><div class="vs"><svg><use href="#up"/></svg><i></i><svg><use href="#dn"/></svg></div></div>
<div class="hs"><i></i><svg><use href="#rt"/></svg></div>
<div class="acts"><button class="off" aria-label="Settings"><svg><use href="#setv"/></svg></button><button aria-label="New"><svg><use href="#newv"/></svg></button><button class="red" aria-label="Delete"><svg><use href="#x"/></svg></button></div>
<h2><i class="c"></i>Properties</h2>
<div class="props"><svg><use href="#work"/></svg><input aria-label="ID" class="pid"><input aria-label="Name" class="pn" value="Door and Window Schedule"></div>
<button class="set2" disabled>Settings...</button>
</aside>

<section class="dlg">
<div class="dt"><h3>Doors+Windows Schedule Notes</h3><i class="spin"></i><button aria-label="Close"><svg><use href="#x"/></svg></button></div>
<div class="db"><button aria-label="Label"><svg><use href="#ec"/></svg></button><button class="grn" aria-label="Refresh"><svg><use href="#ref"/></svg></button><button aria-label="Link"><svg><use href="#link"/></svg></button></div>
<div class="hd1"><label for="cn">Custom Notes</label><span class="live"><input type="checkbox" id="le"><label for="le">Live Edit</label></span></div>
<div class="rowx"><div class="ta"><textarea id="cn"></textarea><div class="sc"><svg><use href="#up"/></svg><svg><use href="#dn"/></svg></div></div><div class="sd"><button aria-label="Pick up"><svg><use href="#drop"/></svg></button><button aria-label="Inject"><svg><use href="#syr"/></svg></button></div></div>
<div class="mh"><i class="c"></i><label for="mn">Managed Notes</label></div>
<div class="srch"><input id="mn" type="text"><svg class="bl"><use href="#lens"/></svg><svg><use href="#ab"/></svg></div>
<div class="lw"><ul class="list"><li class="h"><i class="c"></i>Accessories</li><li><svg><use href="#A"/></svg>Accessory 1</li><li><svg><use href="#A"/></svg>Accessory 3</li><li><svg><use href="#A"/></svg>Accessory 9</li><li class="h"><i class="c"></i>Finishes</li><li><svg><use href="#A"/></svg>Finish #2 Satin</li><li><svg><use href="#A"/></svg>Finish #3 Coloured</li><li class="h"><i class="c"></i>Glazing</li><li><svg><use href="#A"/></svg>Double Glazing 12mm</li><li><svg><use href="#A"/></svg>Single Glazing 12mm</li></ul><div class="ls"><svg><use href="#up"/></svg><i></i><svg><use href="#dn"/></svg></div></div>
<div class="sh"><label for="sl">Schedule Label Notes</label></div>
<div class="rowx big"><div class="ta"><textarea id="sl"></textarea><div class="sc"><svg><use href="#up"/></svg><svg><use href="#dn"/></svg></div></div><div class="sd"><button class="off" aria-label="Rename"><svg viewBox="0 0 16 16"><path d="M1 2h6v8H1zM2 4h4M2 6h4M2 8h4M9 10l3-8 3 8M10 7h4M4 13c3 2 6 2 8 0"/></svg></button><button class="red off2" aria-label="Remove"><svg><use href="#x"/></svg></button></div></div>
<div class="df"><button aria-label="Add"><svg><use href="#plus"/></svg></button><button aria-label="Subtract"><svg><use href="#minus"/></svg></button><button aria-label="Pick up"><svg><use href="#drop"/></svg></button><button aria-label="Inject"><svg><use href="#syr"/></svg></button></div>
</section>
<div class="veil"></div>
</main>
<footer><span>Click an Element or Draw a Selection Area. Press and Hold Ctrl+Shift to Toggle Element/Sub-Element Selection.</span><span class="gid"><svg viewBox="0 0 16 16"><path d="M1 2h11v9H1zM1 4h11M5 7h10v7H5z"/></svg><b>GRAPHISOFT</b> ID</span></footer>
</div>
</body>
</html>
```
FILE: styles.css
```
* { box-sizing: border-box; }
body { margin: 0; background: #000; color: #1c1c1c; font: 9px/12px "Open Sans", "Noto Sans", sans-serif; }
button, input, textarea { font: inherit; color: inherit; margin: 0; padding: 0; border: 0; background: none; }
h1, h2, h3, p, ul { margin: 0; padding: 0; font-weight: 400; list-style: none; font-size: inherit; }
a { color: inherit; text-decoration: none; }
svg { fill: none; stroke: currentColor; display: block; flex: none; width: 16px; height: 16px; }
.sprite { position: absolute; width: 0; height: 0; }
.bf { fill: #3c63c8; stroke: #3c5cb4; }
.bs { stroke: #3f73dc; }
.lb { fill: #cfe0ff; stroke: #3f73dc; }
.k { fill: currentColor; }
.gf { fill: #888; stroke: #333; }
.off { color: #aaa; }
.c { width: 0; height: 0; border: 3px solid transparent; border-top: 4px solid #111; border-bottom: 0; flex: none; }
.c.off { border-top-color: #666; }
.r { width: 0; height: 0; border: 3px solid transparent; border-left: 4px solid #111; border-right: 0; flex: none; }

.app { display: flex; flex-direction: column; height: 100vh; margin: 0 44px 0 43px; background: #f0f0ee; overflow: hidden; }
.title { display: flex; align-items: center; height: 20px; padding-left: 1px; background: #fff; gap: 2px; flex: none; }
.title h1 { font-size: 10px; }
.logo { width: 12px; height: 12px; }
.win { margin-left: auto; display: flex; }
.win button { width: 39px; display: grid; place-items: center; }
.win svg { width: 8px; height: 8px; }
.menu { display: flex; align-items: center; gap: 4px; height: 15px; padding-left: 2px; background: #fff; font: 10px/14px Lato, "Open Sans", sans-serif; flex: none; }
.dock { margin-left: auto; width: 12px; height: 8px; }

.bar { display: flex; align-items: stretch; height: 21px; border-bottom: 1px solid #dcdcda; background: #f3f3f1; padding-left: 1px; flex: none; }
.g { display: flex; align-items: center; justify-content: space-around; border-left: 1px solid #d4d4d2; flex: none; margin-left: 3px; }
.g:first-child { border: 0; margin: 0; }
.g.n { margin-left: 0; border: 0; }
.g.on { background: #c5e2f6; border: 0; }
.g svg { width: 15px; height: 15px; }
.w2 { width: 38px; } .w6 { width: 106px; } .w5 { width: 100px; } .w8 { width: 133px; } .w1 { width: 17px; }
.w4 { width: 87px; } .w9 { width: 143px; } .w3 { width: 55px; } .w7 { width: 125px; } .w10 { width: 53px; }
.w9 { margin-left: 0; }
.go { display: flex; align-items: center; gap: 5px; padding-left: 7px; border-left: 1px solid #d4d4d2; font-size: 10px; }

.info { height: 51px; padding: 1px 8px 0; border-bottom: 1px solid #d6d6d4; font-size: 8px; flex: none; }
.modes { display: flex; align-items: flex-end; height: 30px; }
.m { display: flex; align-items: center; justify-content: space-around; height: 16px; width: 36px; background: #e2e2e0; border: 1px solid #cfcfcd; }
.m svg { width: 14px; height: 14px; }
.m.sel { background: #cfe8fa; border-color: #8bb8d8; }
.m.tall { height: 25px; width: 41px; }

main { flex: 1; min-height: 0; display: grid; grid-template: minmax(0, 1fr) / 76px minmax(0, 1fr) 240px; position: relative; }
.tools { border-right: 1px solid #ccc; padding-top: 6px; color: #777; }
.pair { display: grid; grid-template-columns: 1fr 1fr; grid-auto-rows: 24px; padding-bottom: 5px; }
.pair button { display: grid; place-items: center; }
.pair svg { width: 22px; height: 22px; }
.pair svg.s { width: 15px; height: 15px; }
.k2, .dk { color: #222; }
.sel { background: #bfdff5; }
.set { height: 343px; grid-template-rows: repeat(14, 1fr); padding: 1px 0 2px; }
.tools h2, .side h2 { display: flex; align-items: center; gap: 6px; height: 15px; padding-left: 5px; background: #dadad8; color: #111; font-size: 9px; margin-bottom: 2px; }

.work { display: flex; flex-direction: column; min-width: 0; background: #fffffc; }
.tabs { display: flex; height: 18px; background: #dadad8; flex: none; }
.tabs .all { width: 21px; background: #fffffc; display: grid; place-items: center; }
.all svg { width: 16px; height: 12px; }
.tabs a { flex: 0 1 136px; min-width: 0; display: flex; align-items: center; gap: 1px; padding-left: 3px; white-space: nowrap; }
.tabs a svg { width: 16px; height: 14px; }
.tabs .cur { background: #fffffc; }
.tabs b { font: 10px/12px "DejaVu Sans", sans-serif; color: #000; }
.blue svg { color: #3f73dc; }
.tabm { display: flex; align-items: center; gap: 5px; margin-left: auto; padding-right: 2px; color: #3f73dc; }
.tabm svg { width: 24px; }
.canvas { flex: 1; min-height: 0; overflow: hidden; }
.draw { width: 877px; height: 559px; stroke: none; }
.dim { stroke: #c3cdea; stroke-width: 1; }
.dim text { stroke: none; fill: #4036b8; font: 6px "Liberation Sans", sans-serif; }
.tk { stroke: #6a70a0; }
.lt { stroke: #8fc8ee; }
.fr { stroke: #f6bfa3; }
.dr { stroke: #f1a080; stroke-width: 2; }
.ds { stroke: #b4b4b4; stroke-dasharray: 2 3; }
.hd { stroke: #dd6a48; stroke-width: 2; }
.lb2 { fill: #3d94d6; font: 7px "Liberation Sans", sans-serif; }
.nt { fill: #111; font: 6px "Liberation Sans", sans-serif; }
.quick { display: flex; align-items: center; height: 18px; padding-right: 18px; background: #f3f3f1; flex: none; }
.zoom { display: flex; justify-content: space-around; width: 59px; }
.quick svg { width: 14px; height: 14px; }
.q { flex: 1; display: flex; align-items: center; height: 18px; padding: 0 4px 0 5px; border-left: 1px solid #dcdcda; white-space: nowrap; }
.q span { flex: 1; text-align: center; }
.q svg { width: 13px; height: 13px; }
.dim2 { color: #999; }

.side { display: flex; flex-direction: column; min-width: 0; border-left: 2px solid #cfcfcd; }
.top { display: flex; justify-content: space-between; height: 34px; flex: none; }
.chooser { display: flex; align-items: center; justify-content: space-around; width: 38px; height: 25px; margin-top: 7px; background: #dededc; }
.maps { display: flex; align-items: center; padding-top: 5px; }
.maps button { width: 25px; height: 25px; display: grid; place-items: center; }
.treebox { flex: 1; min-height: 0; display: flex; background: #fff; }
.tree { flex: 1; overflow: hidden; min-width: 0; }
.tree li { display: flex; align-items: center; gap: 2px; height: 18px; padding-left: 23px; white-space: nowrap; }
.tree svg { width: 15px; height: 15px; }
.tree .k1 { padding-left: 31px; }
.tree .cur { background: #dadad8; font-weight: 700; }
.vs { width: 15px; display: flex; flex-direction: column; align-items: center; padding: 2px 0 4px; background: #f0f0ee; }
.vs svg, .hs svg { width: 8px; height: 8px; }
.vs i { width: 13px; height: 131px; margin: 26px 0 auto; background: #cdcdcb; }
.hs { display: flex; align-items: center; justify-content: space-between; height: 12px; padding-right: 18px; flex: none; }
.hs i { width: 170px; height: 12px; background: #cdcdcb; }
.acts { display: flex; align-items: center; justify-content: flex-end; gap: 9px; height: 32px; padding-right: 6px; flex: none; }
.acts svg { width: 15px; height: 15px; }
.red { color: #e02020; }
.acts .red svg { stroke-width: 2; }
.side h2 { margin-bottom: 5px; flex: none; }
.props { display: flex; align-items: center; gap: 2px; height: 16px; padding: 0 3px 0 1px; flex: none; }
.props svg { width: 14px; height: 14px; }
.props input { height: 16px; border: 1px solid #bbb; background: #fff; padding: 0 2px; min-width: 0; }
.pid { width: 54px; }
.pn { flex: 1; }
.set2 { align-self: center; width: 230px; height: 14px; margin: 4px 0; background: #d3d3d1; color: #8c8c8c; text-align: center; flex: none; }

.dlg { position: absolute; top: 45px; right: 217px; width: 209px; height: 499px; display: flex; flex-direction: column; background: #f0f0f0; border: 1px solid #c8c8c8; box-shadow: 0 1px 4px #0005; }
.dt { display: flex; align-items: center; height: 22px; padding: 0 9px 0 6px; background: #fff; color: #333; }
.dt h3 { font-size: 10px; margin-right: auto; white-space: nowrap; }
.spin { width: 9px; height: 9px; margin: 6px 8px 0 0; border: 2px solid #2f7fe0; border-radius: 50%; }
.dt svg { width: 8px; height: 8px; stroke-width: 2; color: #111; }
.db { display: flex; align-items: center; gap: 8px; height: 26px; padding-left: 6px; border-bottom: 1px solid #ddd; }
.grn { color: #27a75a; }
.hd1 { display: flex; align-items: center; justify-content: space-between; height: 21px; padding: 0 14px 0 3px; }
.hd1 > label, .mh label, .sh label { font-weight: 700; }
.live { display: flex; align-items: center; gap: 2px; }
.live input { appearance: none; width: 11px; height: 11px; border: 1px solid #444; background: #fff; }
.rowx { display: flex; height: 50px; padding-left: 3px; }
.ta { flex: 1; display: flex; border: 1px solid #c4c4c4; background: #fafafa; }
.ta textarea { flex: 1; min-width: 0; resize: none; }
.sc { display: flex; flex-direction: column; justify-content: space-between; width: 15px; align-items: center; padding: 3px 0; color: #aaa; }
.sc svg, .ls svg { width: 8px; height: 8px; stroke-width: 1.5px; }
.sd { width: 26px; display: flex; flex-direction: column; align-items: center; gap: 8px; padding-top: 1px; }
.sd svg { width: 15px; height: 15px; }
.mh { display: flex; align-items: center; gap: 6px; height: 29px; padding: 2px 0 0 3px; }
.mh .c, .list .c { border-width: 6px 4px 0; border-top-color: #888; }
.srch { display: flex; align-items: center; gap: 3px; height: 15px; padding: 0 6px 0 3px; }
.srch input { flex: 1; min-width: 0; height: 15px; border: 1px solid #c4c4c4; background: #fff; padding: 0 3px; }
.srch svg { width: 14px; height: 14px; }
.bl { color: #2f7fe0; }
.lw { display: flex; height: 141px; margin: 3px 1px 0 3px; }
.list { flex: 1; overflow: hidden; background: #fff; }
.list li { display: flex; align-items: center; gap: 6px; height: 15px; color: #444; }
.list .h { background: #dfdfdf; font-weight: 700; color: #222; gap: 12px; }
.list svg { width: 14px; height: 14px; }
.ls { width: 16px; display: flex; flex-direction: column; align-items: center; padding: 1px 0 3px; }
.ls i { width: 14px; height: 85px; margin: 4px 0 auto; background: #c8c8c8; }
.sh { height: 26px; padding: 9px 0 0 3px; }
.rowx.big { height: 125px; }
.big .ta { border-color: #e4e4e4; }
.off2 { opacity: .6; }
.df { display: flex; flex: 1; align-items: center; gap: 9px; padding-left: 62px; color: #557; }
.df svg, .big svg { width: 15px; height: 15px; }
.df button:first-child { color: #2f7fe0; }
.big .sc svg { width: 8px; height: 8px; }
.veil { position: absolute; top: 0; right: 240px; bottom: 0; width: 208px; background: rgb(19 199 231 / .5); border: 1px solid rgb(90 140 160 / .5); pointer-events: none; }

footer { display: flex; align-items: center; justify-content: space-between; height: 18px; padding-right: 33px; font: 10px/12px Roboto, "Open Sans", sans-serif; white-space: nowrap; flex: none; }
.gid { display: flex; align-items: center; gap: 3px; font-size: 11px; }
.gid svg { width: 14px; height: 14px; margin-right: 12px; }
```
